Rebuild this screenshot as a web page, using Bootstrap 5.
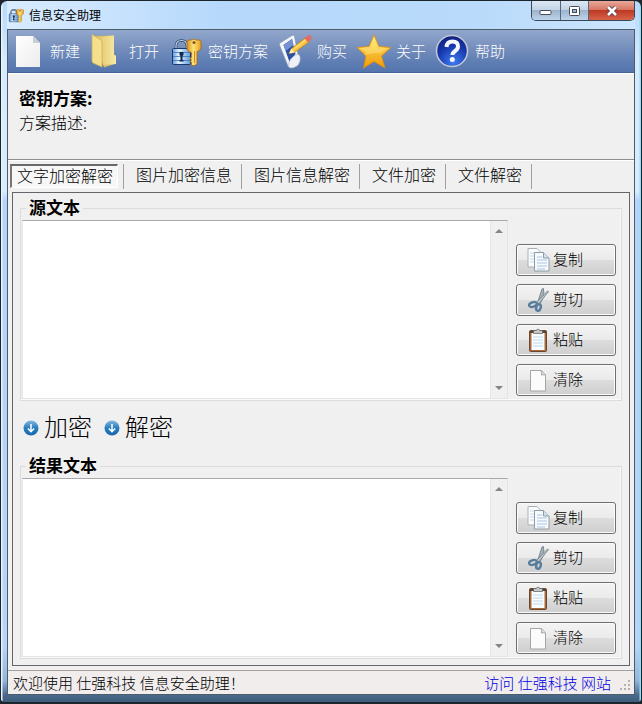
<!DOCTYPE html>
<html lang="zh-CN">
<head>
<meta charset="utf-8">
<meta name="viewport" content="width=device-width, initial-scale=1">
<title>信息安全助理</title>
<link rel="stylesheet" href="https://cdn.jsdelivr.net/npm/bootstrap@5.3.0/dist/css/bootstrap.min.css">
<style>
body{font-family:"Noto Sans CJK SC",sans-serif;font-size:16px;line-height:20px;color:#000;background:#20262e}
button{font-family:inherit;color:inherit;font-weight:300}
svg{display:block;flex:none}
.win{border:1px solid #1c242c;border-bottom-width:2px;border-radius:7px 7px 5px 5px;padding:0 6px 7px;
 background:linear-gradient(90deg,#e5f4ff 1px,transparent 2px,transparent calc(100% - 2px),#8fdcf5 calc(100% - 1px)),linear-gradient(#b9d8f8 0,#c3dffb 28px,#d5eaff 60px,#d9ecff 190px,#b4d3fa 200px,#b9d4f5 92%,#92b4d8 97%,#4a6a8c 99%,#3f5c7a)}
.titlebar{height:28px;background:linear-gradient(90deg,#d9ecff,#b5d8fb 35%,#b9dafa 75%,#cde6ff)}
.titletext{font-size:12px;line-height:16px}
.capbtns{border:1px solid #36495c;border-top:0;border-radius:0 0 5px 5px;overflow:hidden;height:20px}
.capbtn{border:0;padding:0;width:28px;background:linear-gradient(#dbe7f4,#c4d4e6 45%,#9db4cd 50%,#bdd4ea)}
.capbtn + .capbtn{border-left:1px solid #53677c}
.capbtn.closer{width:46px;background:linear-gradient(#e9a99b,#d97765 45%,#bd3a25 50%,#d8634a)}
.client{border:1px solid #4d5c6b;background:#f0f0f0}
.tools{height:43px;padding:0 2px;gap:9px;background:linear-gradient(#92a7cc,#7790bd 40%,#5c7cb2 80%,#5576ad);border-bottom:1px solid #45649a}
.tool{border:0;background:none;padding:0;gap:4px;color:#fff;font-size:15px}
.scheme{height:87px;padding:12px 11px 0;border-top:1px solid #fff;border-bottom:1px solid #8e8e8e;line-height:24px;font-weight:300}
.scheme strong{font-size:17px;font-weight:700}
.tabs{padding:3px 2px 0;border-top:1px solid #fff;height:32px}
.tabbtn{border:0;border-right:1px solid #a0a0a0;background:none;padding:0 9px 6px 12px;height:25px;line-height:18px}
.tabbtn.on{border:1px solid #fff;border-top:2px solid #696969;border-left:2px solid #777;background:#f7f7f7;padding:0 4px 4px 5px;height:24px;margin-right:5px;min-width:107px}
.tabsep{width:1px;height:25px;background:#a0a0a0}
.pane{margin:0 4px 4px;border:1px solid #64646a;padding:5px 7px 6px}
.group{border:1px solid #dcdcdc;padding:2px 5px 1px 1px;box-shadow:inset -1px -1px #fafafa;display:flex;flex-direction:column}
.group legend{float:none;width:auto;margin:0 0 0 4px;padding:0 3px 2px;font-size:17px;line-height:18px;font-weight:700}
.textbox{border:1px solid #e3e3e8;border-top-color:#a9a9ad;background:#fff;min-height:179px}
.textbox textarea{border:0;outline:0;resize:none;padding:3px;overflow:hidden;background:#fff;min-width:0}
.track{width:17px;background:#f0f0f0;border-left:1px solid #e6e6e6;padding:7px 0}
.side{width:100px;margin-left:8px;padding-bottom:3px;gap:8px}
.side button{height:32px;border:1px solid #707070;border-radius:3px;padding:0 10px;gap:2px;box-shadow:inset 0 0 0 1px #fbfbfb;background:linear-gradient(#f3f3f3,#ebebeb 49%,#dddddd 50%,#cfcfcf);font-size:15px;line-height:28px}
.side span{padding-bottom:3px}
.actions{height:55px;padding:0 3px 2px;gap:12px}
.actions button{border:0;background:none;padding:0;gap:5px;font-size:24px;line-height:30px}
.actions span{padding-bottom:4px}
.status{height:24px;border-top:1px solid #a5a0a0;background:#f1eded;padding:0 2px 0 5px;font-size:15px;font-weight:300}
.status a{color:#0000e0}
</style>
<script src="https://cdn.jsdelivr.net/npm/bootstrap@5.3.0/dist/js/bootstrap.bundle.min.js"></script>
</head>
<body>
<svg width="0" height="0" class="position-absolute" aria-hidden="true">
<defs>
<linearGradient id="paper" x1="0" y1="0" x2="1" y2="1"><stop offset="0" stop-color="#fff"/><stop offset="1" stop-color="#ececec"/></linearGradient>
<linearGradient id="gold" x1="0" y1="0" x2="0" y2="1"><stop offset="0" stop-color="#ffe76a"/><stop offset="1" stop-color="#f29a08"/></linearGradient>
<linearGradient id="keyg" x1="0" y1="0" x2="1" y2="0"><stop offset="0" stop-color="#d88f1c"/><stop offset=".45" stop-color="#ffe37a"/><stop offset="1" stop-color="#e9a020"/></linearGradient>
<linearGradient id="fold" x1="0" y1="0" x2="1" y2="0"><stop offset="0" stop-color="#e2c768"/><stop offset="1" stop-color="#f7eaa6"/></linearGradient>
<linearGradient id="lockg" x1="0" y1="0" x2="1" y2="0"><stop offset="0" stop-color="#5b9ade"/><stop offset=".35" stop-color="#e6f5ff"/><stop offset="1" stop-color="#5d9cdc"/></linearGradient>
<radialGradient id="orb" cx=".55" cy=".85" r=".85"><stop offset="0" stop-color="#3f7df0"/><stop offset=".6" stop-color="#1737ad"/><stop offset="1" stop-color="#122077"/></radialGradient>
<linearGradient id="drop" x1="0" y1="0" x2="0" y2="1"><stop offset="0" stop-color="#86b8dc"/><stop offset=".5" stop-color="#2a7dbd"/><stop offset="1" stop-color="#1769b0"/></linearGradient>
<symbol id="i-lock" viewBox="0 0 36 36"><path d="M8 17v-4q0-5.500 5.500-5.500T19 13v4" fill="none" stroke="#29466e" stroke-width="2.600"/><path d="M8 17v-4q0-5.500 5.500-5.500T19 13v4" fill="none" stroke="#c5d5e5" stroke-width="1.200"/><rect x="4.500" y="15.500" width="18" height="16" rx="1" fill="url(#lockg)" stroke="#173b70"/><path d="M5 19.500h17M5 23.500h17M5 27.500h17" stroke="#3973b3" stroke-width=".8"/><path d="M11.500 19h4v3l-1 1v4h1v1.500h-4V27h1v-4l-1-1z" fill="#13284e"/><path d="M19 8.500q0-1.500 2-1.500h3l2-1 2 1h3q2 0 2 1.500v6q0 3-4 4v12l-2 2h-3.500v-3l-1.500-1 1.500-1.500-1.500-1.500 1.500-1.500v-4.500q-4.500-1-4.500-4z" fill="url(#keyg)" stroke="#a96a12" stroke-width=".8"/><circle cx="26" cy="9.500" r="1.500" fill="#80531d"/><path d="M26.500 18v12" stroke="#b97714" stroke-width=".8"/></symbol>
<symbol id="i-copy" viewBox="0 0 24 26"><path d="M1 1.500h9l4 4V20H1z" fill="#f9fbfc" stroke="#a8b2b6"/><path d="M3 6h7M3 9h8M3 12h8M3 15h8" stroke="#c8d9eb"/><path d="M7.500 5.500h9L22 11v13H7.500z" fill="#f8fafc" stroke="#8c9ca4"/><path d="M16.500 5.500V11H22" fill="#d6e0e8" stroke="#8c9ca4"/><path d="M10 10h5M10 13h10M10 16h10M10 19h10M10 22h8" stroke="#a7c4e6"/></symbol>
<symbol id="i-cut" viewBox="0 0 24 26"><path d="M15 2l1.500-.5L17 9l-4 8-2.500-1z" fill="#a6afb4" stroke="#697b85" stroke-width=".8"/><path d="M21.500 4.500L20.500 4 9 16l2 2z" fill="#c3cacd" stroke="#697b85" stroke-width=".8"/><g fill="none" stroke="#587d9c" stroke-width="2.400"><ellipse cx="6" cy="17.500" rx="4" ry="2.300" transform="rotate(-18 6 17.500)"/><ellipse cx="11.500" cy="20.500" rx="2.200" ry="3.400" transform="rotate(18 11.500 20.500)"/></g></symbol>
<symbol id="i-paste" viewBox="0 0 24 26"><rect x="2.500" y="3.500" width="17" height="21" rx="1" fill="#a86a3c" stroke="#6b4630"/><path d="M4.500 5.500h13V23h-13z" fill="#fafdff"/><path d="M3 4h16v2H3z" fill="#5a4234"/><path d="M6 10h10M6 13h10M6 16h10M6 19h10" stroke="#c0d8ee"/><path d="M6.500 3.500h2.500q2-3 4 0h2.500V6.500h-9z" fill="#c3c8ca" stroke="#5d5d5d" stroke-width=".7"/></symbol>
<symbol id="i-blank" viewBox="0 0 24 26"><path d="M3.500 3.500h11l4 4.500V24h-15z" fill="#fbfbfb" stroke="#a5a5a5"/><path d="M14 3.500q1 2 .5 4.500 2-.5 4 0" fill="#e2e2e2" stroke="#a5a5a5"/></symbol>
<symbol id="i-down" viewBox="0 0 16 16"><circle cx="8" cy="8" r="7.500" fill="url(#drop)"/><path d="M8 4v7.500M4.800 8.500L8 11.700l3.200-3.200" fill="none" stroke="#fff" stroke-width="1.500"/></symbol>
</defs>
</svg>
<div class="win d-flex flex-column min-vh-100">
 <header class="titlebar d-flex align-items-start">
  <div class="d-flex align-items-center gap-1 pt-1"><svg width="18" height="20"><use href="#i-lock"/></svg><span class="titletext">信息安全助理</span></div>
  <div class="capbtns d-flex ms-auto">
   <button class="capbtn d-flex align-items-center justify-content-center" aria-label="最小化"><svg width="14" height="10"><rect x="1" y="4.500" width="11" height="4" rx="1" fill="#fff" stroke="#454d5b"/></svg></button>
   <button class="capbtn d-flex align-items-center justify-content-center" aria-label="最大化"><svg width="14" height="12"><rect x="1.500" y="1.500" width="10" height="9" rx="1" fill="#fff" stroke="#454d5b"/><rect x="4.500" y="4.500" width="4" height="3" fill="#9db4cd" stroke="#454d5b"/></svg></button>
   <button class="capbtn closer d-flex align-items-center justify-content-center" aria-label="关闭"><svg width="14" height="12"><path d="M3 2l8 8M11 2l-8 8" stroke="#5a3840" stroke-width="4.500"/><path d="M3 2l8 8M11 2l-8 8" stroke="#fff" stroke-width="2.700"/></svg></button>
  </div>
 </header>
 <main class="client d-flex flex-column flex-grow-1">
  <nav class="tools d-flex align-items-center">
   <button class="tool d-flex align-items-center"><svg width="36" height="36"><path d="M6 3h17l7 7v24H6z" fill="url(#paper)"/><path d="M23 3v7h7z" fill="#c9ced6"/></svg>新建</button>
   <button class="tool d-flex align-items-center"><svg width="36" height="36"><path d="M4 3l21-.5v19l2 1v8l-12 4z" fill="#d9bd5d"/><path d="M9 4l16-1.500V22l2 1v8l-13 1z" fill="url(#fold)"/><path d="M3 1.500l9 5.500q1 .6 1 2v25l-9-4q-1-.5-1-2z" fill="#f3df8d" stroke="#cfb252" stroke-width=".8"/></svg>打开</button>
   <button class="tool d-flex align-items-center"><svg width="36" height="36"><use href="#i-lock"/></svg>密钥方案</button>
   <button class="tool d-flex align-items-center"><svg width="36" height="36"><path d="M2.500 12q-.5-1 .5-2L15 2.500q2-1 2.500 1L21 22l-5 12q-3 2-5-1z" fill="#f4f6fb" stroke="#8d99b4" stroke-width=".7"/><path d="M6.500 12L15 6l3.500 15-6 8z" fill="#2c50a4"/><path d="M6.500 12L15 6l1.500 6-8 6z" fill="#7593d2"/><path d="M11 33q1.500-9 10-12 3 2 2 7-1 5-6 6.500-4 1.500-6-1.500z" fill="#eef0f6" stroke="#aab2c6" stroke-width=".6"/><path d="M12 20.500l2.500-5L29 4.500l3.500 4-15 11z" fill="#f7c63c" stroke="#b77d18" stroke-width=".7"/><path d="M12 20.500l2.500-5 3 4z" fill="#fff0c9"/><path d="M27.500 5.500l3.500-3q2-1 3 1t0 3l-3 2.700z" fill="#e66b63"/><path d="M16.500 16.500L28.500 7" stroke="#fff0a0"/></svg>购买</button>
   <button class="tool d-flex align-items-center"><svg width="36" height="36"><path d="M18 2l5 11.500 12 1-9.500 8.500 3.500 12-11-6.500L7.500 35 10 23 1 14.500l12-1z" fill="url(#gold)" stroke="#e48b0b" stroke-width=".8" stroke-linejoin="round"/><path d="M18 4l4 10 10 1.500-8 4.500-6 0-11 2 4-2-8-5 11-1z" fill="#fff5a0" opacity=".35"/></svg>关于</button>
   <button class="tool d-flex align-items-center"><svg width="36" height="36"><circle cx="17" cy="18" r="15.500" fill="url(#orb)" stroke="#bfc7d8" stroke-width="1.600"/><path d="M11.500 14q.5-5.500 6-5.500t5.500 4.800q0 3-3.200 5-2.300 1.500-2.300 3.700" fill="none" stroke="#f5f7ff" stroke-width="4"/><circle cx="17.300" cy="26.500" r="2.500" fill="#f5f7ff"/></svg>帮助</button>
  </nav>
  <section class="scheme"><strong class="d-block">密钥方案:</strong><div>方案描述:</div></section>
  <div class="tabs d-flex" role="tablist">
   <button class="tabbtn on text-start" role="tab" aria-selected="true">文字加密解密</button><span class="tabsep"></span>
   <button class="tabbtn" role="tab">图片加密信息</button>
   <button class="tabbtn" role="tab">图片信息解密</button>
   <button class="tabbtn" role="tab">文件加密</button>
   <button class="tabbtn" role="tab">文件解密</button>
  </div>
  <div class="pane d-flex flex-column flex-grow-1">
   <fieldset class="group flex-grow-1"><legend>源文本</legend>
    <div class="d-flex flex-grow-1">
     <div class="textbox d-flex flex-grow-1"><textarea class="flex-grow-1" aria-label="源文本"></textarea><div class="track d-flex flex-column justify-content-between align-items-center" aria-hidden="true"><svg width="9" height="5"><path d="M0 5l4-4 4 4z" fill="#858585"/></svg><svg width="9" height="5"><path d="M0 0l4 4 4-4z" fill="#858585"/></svg></div></div>
     <div class="side d-flex flex-column justify-content-end flex-shrink-0">
      <button class="d-flex align-items-center"><svg width="24" height="26"><use href="#i-copy"/></svg><span>复制</span></button>
      <button class="d-flex align-items-center"><svg width="24" height="26"><use href="#i-cut"/></svg><span>剪切</span></button>
      <button class="d-flex align-items-center"><svg width="24" height="26"><use href="#i-paste"/></svg><span>粘贴</span></button>
      <button class="d-flex align-items-center"><svg width="24" height="26"><use href="#i-blank"/></svg><span>清除</span></button>
     </div>
    </div>
   </fieldset>
   <div class="actions d-flex align-items-center">
    <button class="d-flex align-items-center"><svg width="16" height="16"><use href="#i-down"/></svg><span>加密</span></button>
    <button class="d-flex align-items-center"><svg width="16" height="16"><use href="#i-down"/></svg><span>解密</span></button>
   </div>
   <fieldset class="group flex-grow-1"><legend>结果文本</legend>
    <div class="d-flex flex-grow-1">
     <div class="textbox d-flex flex-grow-1"><textarea class="flex-grow-1" aria-label="结果文本"></textarea><div class="track d-flex flex-column justify-content-between align-items-center" aria-hidden="true"><svg width="9" height="5"><path d="M0 5l4-4 4 4z" fill="#858585"/></svg><svg width="9" height="5"><path d="M0 0l4 4 4-4z" fill="#858585"/></svg></div></div>
     <div class="side d-flex flex-column justify-content-end flex-shrink-0">
      <button class="d-flex align-items-center"><svg width="24" height="26"><use href="#i-copy"/></svg><span>复制</span></button>
      <button class="d-flex align-items-center"><svg width="24" height="26"><use href="#i-cut"/></svg><span>剪切</span></button>
      <button class="d-flex align-items-center"><svg width="24" height="26"><use href="#i-paste"/></svg><span>粘贴</span></button>
      <button class="d-flex align-items-center"><svg width="24" height="26"><use href="#i-blank"/></svg><span>清除</span></button>
     </div>
    </div>
   </fieldset>
  </div>
  <footer class="status d-flex align-items-center"><span>欢迎使用 仕强科技 信息安全助理！</span><a href="#" class="ms-auto me-2 text-decoration-none">访问 仕强科技 网站</a>
   <svg width="13" height="20"><g fill="#b5b0b0"><path d="M9 7h2v2H9zM5 11h2v2H5zM9 11h2v2H9zM1 15h2v2H1zM5 15h2v2H5zM9 15h2v2H9z"/></g></svg></footer>
 </main>
</div>
</body>
</html>
